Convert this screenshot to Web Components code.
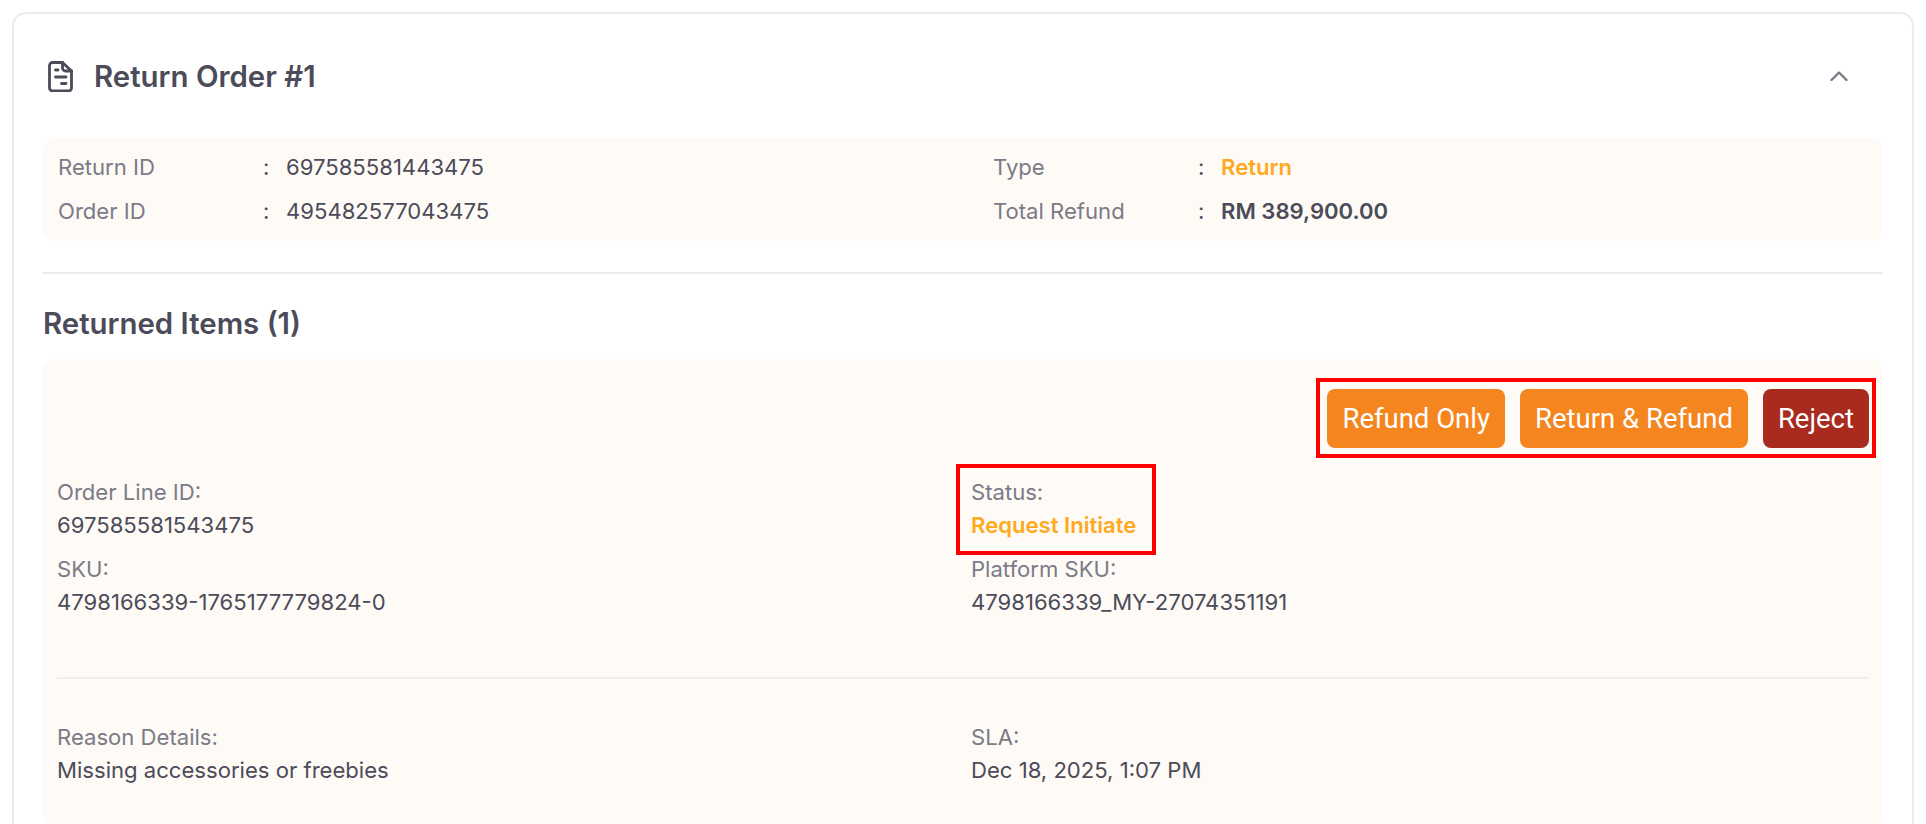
<!DOCTYPE html>
<html lang="en">
<head>
<meta charset="utf-8">
<title>Return Order</title>
<style>
  html, body { margin: 0; height: 824px; overflow: hidden; background: #fff; }
  body { font-family: Inter, "Noto Sans", sans-serif; color: #4b4b59; }
</style>
</head>
<body>
<return-card heading="Return Order #1">
  <summary-panel>
    <kv-row label="Return ID">697585581443475</kv-row>
    <kv-row label="Type" tone="accent" class="right">Return</kv-row>
    <kv-row label="Order ID">495482577043475</kv-row>
    <kv-row label="Total Refund" tone="strong" class="right">RM 389,900.00</kv-row>
  </summary-panel>
  <returned-item count="1">
    <mark-box slot="actions" inset="-11px -7px -10px -11px">
      <action-button>Refund Only</action-button>
      <action-button>Return &amp; Refund</action-button>
      <action-button type="reject">Reject</action-button>
    </mark-box>
    <item-field slot="top" label="Order Line ID:">697585581543475</item-field>
    <mark-box slot="top" inset="-12px -20px -13px -15px"><item-field label="Status:" tone="accent">Request Initiate</item-field></mark-box>
    <item-field slot="top" label="SKU:">4798166339-1765177779824-0</item-field>
    <item-field slot="top" label="Platform SKU:">4798166339_MY-27074351191</item-field>
    <item-field slot="bottom" label="Reason Details:">Missing accessories or freebies</item-field>
    <item-field slot="bottom" label="SLA:">Dec 18, 2025, 1:07 PM</item-field>
  </returned-item>
</return-card>

<script>
// Card shell with header, summary slot and divider
class ReturnCard extends HTMLElement {
  constructor() {
    super();
    this.attachShadow({ mode: 'open' });
  }

  connectedCallback() {
    this.shadowRoot.innerHTML = `
      <style>
        :host {
          display: block;
          box-sizing: border-box;
          width: 1902px;
          margin: 12px 0 0 12px;
          padding: 0 29px 40px 29px;
          border: 2px solid #ececec;
          border-radius: 14px;
          background: #fff;
        }
        header {
          display: flex;
          align-items: center;
          height: 124px;
          padding: 0 35px 0 5px;
        }
        .doc { width: 25px; height: 31px; flex: none; }
        h2 {
          flex: 1;
          margin: 0 0 0 21px;
          font-size: 29.4px;
          font-weight: 600;
          color: #4b4b59;
        }
        .chevron { width: 18px; height: 10px; flex: none; }
      </style>
      <header>
        <svg class="doc" viewBox="0 0 25 31" fill="none" stroke="#4b4b59" stroke-width="2.8" stroke-linecap="round" stroke-linejoin="round">
          <path d="M4.5 1.5H14.5L23.5 10V27a3 3 0 0 1-3 3H4.5a3 3 0 0 1-3-3V4.5a3 3 0 0 1 3-3Z"/>
          <path d="M14.5 1.5V7a3 3 0 0 0 3 3H23.5"/>
          <path d="M7.5 9H10M7.5 16H18M13.5 22.5H18"/>
        </svg>
        <h2>${this.getAttribute('heading')}</h2>
        <svg class="chevron" viewBox="0 0 18 10" fill="none" stroke="#7b7b87" stroke-width="2.4" stroke-linecap="round" stroke-linejoin="round">
          <path d="M1.5 9L9 1.5L16.5 9"/>
        </svg>
      </header>
      <slot></slot>
    `;
  }
}
customElements.define('return-card', ReturnCard);

// Four key/value rows over two columns
class SummaryPanel extends HTMLElement {
  constructor() {
    super();
    this.attachShadow({ mode: 'open' });
  }

  connectedCallback() {
    this.shadowRoot.innerHTML = `
      <style>
        :host {
          display: grid;
          grid-template-columns: 935px 1fr;
          padding: 7px 15px 8px;
          background: #fefaf5;
          border-radius: 12px;
        }
      </style>
      <slot></slot>
    `;
  }
}
customElements.define('summary-panel', SummaryPanel);

class KvRow extends HTMLElement {
  constructor() {
    super();
    this.attachShadow({ mode: 'open' });
  }

  connectedCallback() {
    const tone = this.getAttribute('tone') || '';
    this.shadowRoot.innerHTML = `
      <style>
        :host {
          display: grid;
          grid-template-columns: 205px 23px 1fr;
          font-size: 22.1px;
          line-height: 44px;
        }
        .label { color: #7b7b87; }
        .accent { color: #ffa91f; font-weight: 600; }
        .strong { font-weight: 600; }
      </style>
      <span class="label">${this.getAttribute('label')}</span>
      <span>:</span>
      <span class="${tone}"><slot></slot></span>
    `;
  }
}
customElements.define('kv-row', KvRow);

// Returned items section: heading, action bar, two field grids
class ReturnedItem extends HTMLElement {
  constructor() {
    super();
    this.attachShadow({ mode: 'open' });
  }

  connectedCallback() {
    this.shadowRoot.innerHTML = `
      <style>
        :host { display: block; }
        .rule { height: 2px; margin-top: 31px; background: #ececec; }
        h3 {
          margin: 28px 0 13px;
          font-size: 29.4px;
          line-height: 44px;
          font-weight: 600;
          color: #4b4b59;
        }
        .panel {
          padding: 30px 14px 40px;
          background: #fefaf5;
          border-radius: 12px;
        }
        .actions { display: flex; justify-content: flex-end; }
        .grid {
          display: grid;
          grid-template-columns: 897px 1fr;
          column-gap: 17px;
          row-gap: 11px;
        }
        .top { margin-top: 27.5px; }
        .rule.inner { margin: 58px 0 42px; height: 2px; background: #f0eeeb; }
      </style>
      <div class="rule"></div>
      <h3>Returned Items (${this.getAttribute('count')})</h3>
      <div class="panel">
        <div class="actions"><slot name="actions"></slot></div>
        <div class="grid top"><slot name="top"></slot></div>
        <div class="rule inner"></div>
        <div class="grid"><slot name="bottom"></slot></div>
      </div>
    `;
  }
}
customElements.define('returned-item', ReturnedItem);

class ItemField extends HTMLElement {
  constructor() {
    super();
    this.attachShadow({ mode: 'open' });
  }

  connectedCallback() {
    const tone = this.getAttribute('tone') || '';
    this.shadowRoot.innerHTML = `
      <style>
        :host { display: block; font-size: 22.1px; line-height: 33px; }
        .label { display: block; color: #7b7b87; }
        .accent { color: #ffa91f; font-weight: 600; }
      </style>
      <span class="label">${this.getAttribute('label')}</span>
      <span class="${tone}"><slot></slot></span>
    `;
  }
}
customElements.define('item-field', ItemField);

// Red review highlight laid over its content, takes no layout space
class MarkBox extends HTMLElement {
  constructor() {
    super();
    this.attachShadow({ mode: 'open' });
  }

  connectedCallback() {
    this.shadowRoot.innerHTML = `
      <style>
        :host {
          display: flex;
          gap: 15px;
          position: relative;
          width: fit-content;
        }
        :host::after {
          content: '';
          position: absolute;
          inset: ${this.getAttribute('inset')};
          border: 4px solid #ff0000;
          pointer-events: none;
        }
      </style>
      <slot></slot>
    `;
  }
}
customElements.define('mark-box', MarkBox);

class ActionButton extends HTMLElement {
  constructor() {
    super();
    this.attachShadow({ mode: 'open' });
  }

  connectedCallback() {
    const color = this.getAttribute('type') === 'reject' ? '#a92a1f' : '#f5851f';
    this.shadowRoot.innerHTML = `
      <style>
        :host { display: block; }
        button {
          height: 59px;
          padding: 0 15px;
          border: none;
          border-radius: 8px;
          background: ${color};
          color: #fff;
          font: 400 27.5px Roboto, sans-serif;
          cursor: pointer;
        }
      </style>
      <button><slot></slot></button>
    `;
  }
}
customElements.define('action-button', ActionButton);
</script>
</body>
</html>
